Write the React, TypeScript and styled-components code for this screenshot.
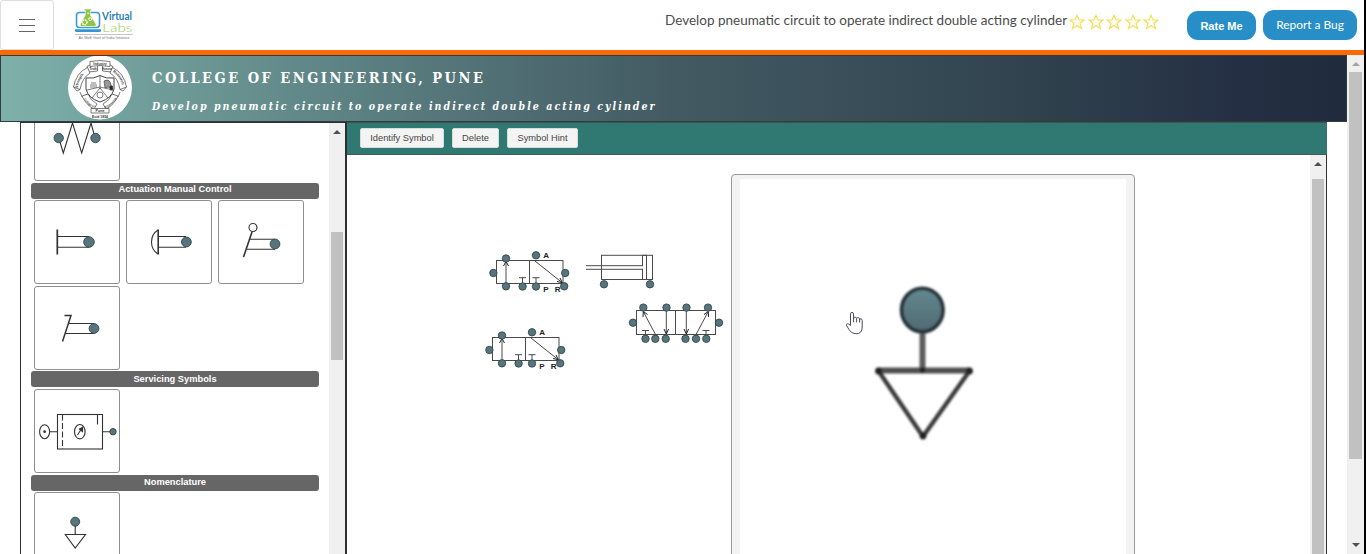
import React from "react";
import styled, { createGlobalStyle } from "styled-components";

const GlobalStyle = createGlobalStyle`
  * { box-sizing: border-box; }
  body { margin: 0; background: #fff; overflow: hidden; font-family: "Liberation Sans", Arial, sans-serif; }
  svg { display: block; }
`;

const DOT = "#56757d";
const INK = "#333";

const Page = styled.div`
  width: 1366px;
  height: 554px;
  display: flex;
  flex-direction: column;
  overflow: hidden;
  border-right: 2px solid #000;
`;

const TopBar = styled.header`
  height: 50px;
  flex: none;
  display: flex;
  align-items: flex-start;
`;

const MenuButton = styled.button`
  width: 54px;
  height: 50px;
  padding: 18px 0 0 18px;
  border: 1px solid #dedede;
  border-radius: 3px;
  background: #fff;
  display: flex;
  flex-direction: column;
  gap: 5px;
`;

const MenuLine = styled.span`
  width: 16px;
  height: 1px;
  background: #666;
`;

const LogoBox = styled.div`
  margin: 6px 0 0 20px;
  width: 62px;
`;

const TopTitle = styled.div`
  margin-left: 529px;
  width: 404px;
  padding-top: 11px;
  font: 13.5px/18px Lato, sans-serif;
  color: #4c4c4c;
  white-space: nowrap;
`;

const Stars = styled.div`
  display: flex;
  gap: 2.5px;
  padding-top: 14px;
`;

const PillButton = styled.button<{ $bold?: boolean }>`
  border: 0;
  border-radius: 11px;
  background: #288ec8;
  color: #fff;
  padding: 0;
  white-space: nowrap;
  width: ${(p) => (p.$bold ? 69 : 94)}px;
  height: ${(p) => (p.$bold ? 29 : 30)}px;
  margin: ${(p) => (p.$bold ? "11px 0 0 28px" : "10px 0 0 7px")};
  padding-bottom: ${(p) => (p.$bold ? 0 : 2)}px;
  font: ${(p) => (p.$bold ? 'bold 11px "Liberation Sans", Arial' : "11.9px Lato")}, sans-serif;
`;

const OrangeRule = styled.div`
  height: 5px;
  flex: none;
  background: #fb6a04;
`;

const Frame = styled.div`
  flex: 1;
  min-height: 0;
  display: flex;
`;

const FrameBody = styled.div`
  width: 1347px;
  display: flex;
  flex-direction: column;
`;

const Banner = styled.div`
  height: 67px;
  flex: none;
  display: flex;
  border: 1px solid #333b3d;
  background: linear-gradient(to right, #7eb1aa 0%, #5a7e80 28%, #435a63 50%, #31444f 75%, #242f43 92%, #202b3d 100%);
  padding-left: 67px;
`;

const BannerText = styled.div`
  margin-left: 20px;
  color: #fff;
  font-family: "DejaVu Serif Condensed", "DejaVu Serif", serif;
  font-weight: bold;
  white-space: nowrap;
`;

const College = styled.h1`
  margin: 12px 0 0;
  font-size: 14.5px;
  line-height: 20px;
  letter-spacing: 2.5px;
`;

const Experiment = styled.h2`
  margin: 10px 0 0;
  font-size: 10.5px;
  line-height: 16px;
  font-style: italic;
  letter-spacing: 2.06px;
`;

const Work = styled.main`
  flex: 1;
  min-height: 0;
  display: flex;
  padding: 0 20px;
`;

const Palette = styled.aside`
  width: 327px;
  flex: none;
  display: flex;
  border: solid #2d3032;
  border-width: 1px 2px 0 1px;
  overflow: hidden;
`;

const PaletteList = styled.div`
  width: 308px;
  flex: none;
  padding-left: 10px;
  margin-top: -26px;
`;

const SectionTitle = styled.div<{ $top: number; $bottom: number; $line?: number }>`
  width: 288px;
  height: 16px;
  margin: ${(p) => p.$top}px 0 ${(p) => p.$bottom}px;
  border-radius: 3px;
  background: #666;
  color: #fff;
  text-align: center;
  font-weight: bold;
  font-size: 9.3px;
  line-height: ${(p) => p.$line ?? 14}px;
`;

const Cards = styled.div`
  display: flex;
  flex-wrap: wrap;
  gap: 2px 6px;
  padding-left: 3px;
`;

const Card = styled.div`
  width: 86px;
  height: 84px;
  border: 1px solid #8e8e8e;
  border-radius: 3px;
  background: #fff;
`;

const ScrollTrack = styled.div<{ $width: number; $top: number }>`
  width: ${(p) => p.$width}px;
  flex: none;
  background: #f0f0f0;
  padding: 0 2px;
  display: flex;
  flex-direction: column;
  align-items: stretch;
  justify-content: space-between;
  padding-top: ${(p) => p.$top}px;
`;

const ScrollThumb = styled.div<{ $before: number; $height: number }>`
  margin-top: ${(p) => p.$before}px;
  height: ${(p) => p.$height}px;
  background: #c1c1c1;
`;

const Arrow = styled.div<{ $color: string; $down?: boolean }>`
  width: 0;
  height: 0;
  margin: 0 auto;
  border: solid transparent;
  border-width: ${(p) => (p.$down ? "4px 4px 0" : "0 4px 4px")};
  border-${(p) => (p.$down ? "top" : "bottom")}-color: ${(p) => p.$color};
`;

const ArrowGroup = styled.div``;

const Editor = styled.section`
  width: 980px;
  flex: none;
  display: flex;
  flex-direction: column;
`;

const Toolbar = styled.div`
  height: 33px;
  flex: none;
  display: flex;
  align-items: flex-start;
  gap: 8px;
  padding: 5px 0 0 13px;
  background: #2f7972;
  border-top: 1px solid #3b5553;
  border-bottom: 1px solid #455856;
`;

const ToolButton = styled.button<{ $width: number }>`
  width: ${(p) => p.$width}px;
  height: 20px;
  padding: 0;
  border: 1px solid #d5dddc;
  border-radius: 2px;
  background: #f4f4f4;
  color: #444;
  font: 9.3px "Liberation Sans", Arial, sans-serif;
  white-space: nowrap;
`;

const CanvasRow = styled.div`
  flex: 1;
  min-height: 0;
  display: flex;
  border-right: 1px solid #333;
`;

const Canvas = styled.div`
  position: relative;
  flex: 1;
  overflow: hidden;
`;

const Placed = styled.div<{ $x: number; $y: number }>`
  position: absolute;
  left: ${(p) => p.$x}px;
  top: ${(p) => p.$y}px;
`;

const HintPanel = styled.div`
  width: 404px;
  height: 420px;
  border: 1px solid #999;
  border-radius: 4px;
  background: #f3f3f3;
  padding: 4px 8px;
`;

const HintPicture = styled.div`
  height: 100%;
  background: #fff;
`;

type P = { x: number; y: number; r?: number };
const Port = ({ x, y, r = 3.7 }: P) => (
  <circle cx={x} cy={y} r={r} fill={DOT} stroke="#35474c" strokeWidth={0.9} />
);

const Symbol = ({ children }: { children: React.ReactNode }) => (
  <svg width="84" height="82" viewBox="0 0 84 82" fill="none" stroke={INK} strokeWidth="1.1">
    {children}
  </svg>
);

const Tee = ({ x, y }: P) => <path d={`M${x} ${y + 6}V${y}M${x - 3.5} ${y}h7`} />;

const Valve32 = () => (
  <svg width="100" height="58" fill="none" stroke="#4a4a4a" strokeWidth="1">
    <rect x="16.5" y="20.5" width="66.5" height="23" />
    <path d="M49.5 20.5V43.5M26 44V22M55 21L82 42.5" />
    <path d="M23.5 26L26 21.5L28.5 26M77 41.5L82.3 42.7L80 38" stroke="#222" />
    <Tee x={42.5} y={37.7} />
    <Tee x={56} y={37.7} />
    <Port x={13.4} y={33} />
    <Port x={85.2} y={33} />
    <Port x={26} y={18.5} />
    <Port x={26} y={46.3} />
    <Port x={42.6} y={46.5} />
    <Port x={56} y={46.5} />
    <Port x={84.2} y={46.3} />
    <Port x={56} y={15.3} />
    <g fill="#222" stroke="none" fontSize="8" fontWeight="bold" fontFamily="Liberation Sans, Arial, sans-serif">
      <text x="63.3" y="18">A</text>
      <text x="63.3" y="52">P</text>
      <text x="74.7" y="52">R</text>
    </g>
  </svg>
);

const Cylinder = () => (
  <svg width="70" height="42" fill="none" stroke="#4a4a4a" strokeWidth="1">
    <rect x="15.5" y="5.3" width="51" height="24.2" />
    <path d="M56.5 5.3H60.5V29.5H56.5ZM0 15.7H56.5M0 19.3H56.5" />
    <path d="M56.5 16.3v2.4" stroke="#fff" strokeWidth="1.4" />
    <Port x={18} y={34.3} />
    <Port x={64} y={34.3} />
  </svg>
);

const Valve52 = () => (
  <svg width="96" height="46" fill="none" stroke="#4a4a4a" strokeWidth="1">
    <rect x="8.5" y="10.5" width="79" height="24" />
    <path d="M47.5 10.5V34.5M27.5 34.5L15.5 12M38.3 8V33.5M58.3 8V33.5M68 34.5L80 12" />
    <path d="M15 17L15.3 11.5L19.5 14.5M36 29L38.3 34L40.6 29M56 29L58.3 34L60.6 29M76 14.5L80.3 11.5L80.5 17" stroke="#222" />
    <Tee x={17.5} y={30.5} />
    <Tee x={78} y={30.5} />
    {[15.3, 38.5, 58.5, 80].map((x) => <Port key={x} x={x} y={7.6} />)}
    {[17.5, 27.3, 37.7, 57.5, 68, 78.3].map((x) => <Port key={x} x={x} y={38.8} />)}
    <Port x={5} y={22.7} />
    <Port x={91} y={22.7} />
  </svg>
);

const HintSymbol = () => (
  <svg width="110" height="166" fill="none" stroke="#3c3c3c">
    <defs>
      <linearGradient id="port" x1="0" y1="0" x2="0" y2="1">
        <stop offset="0" stopColor="#638891" />
        <stop offset="1" stopColor="#506a71" />
      </linearGradient>
      <filter id="soft"><feGaussianBlur stdDeviation="1" /></filter>
    </defs>
    <g filter="url(#soft)">
      <path d="M52.5 50V92" strokeWidth="6" stroke="#5c5c5c" />
      <path d="M8 91.5H100" strokeWidth="6" stroke="#505050" />
      <path d="M8.5 92L53 157.5L99.5 92" strokeWidth="4.5" strokeLinejoin="round" />
      <g fill="#222" stroke="none">
        <circle cx="8.5" cy="92" r="3.4" />
        <circle cx="99.5" cy="92" r="3.4" />
        <circle cx="53" cy="157" r="3.4" />
        <circle cx="52.5" cy="91" r="2.8" />
      </g>
      <ellipse cx="52.3" cy="31" rx="20.7" ry="21.7" fill="url(#port)" stroke="#263338" strokeWidth="3.8" />
    </g>
  </svg>
);

const HandCursor = () => (
  <svg width="20" height="25" fill="#fff" stroke="#4c4d58" strokeWidth="1" strokeLinejoin="round">
    <path d="M5.5 14V3Q5.5 1.4 7 1.4T8.5 3V7.2Q9 6 10.3 6.2T11.6 7.4Q12.3 6.4 13.4 6.7T14.6 8Q17 7 17.2 9.5V16Q17.2 22.8 11 22.8Q6.5 22.8 4.2 18.8L1.5 14.5Q1 13 2.2 12.7Q3.5 12.4 5.5 14.5Z" />
    <path d="M8.6 7v4.3M11.6 7.4v4M14.6 8v3.5" fill="none" />
  </svg>
);

const Star = () => (
  <svg width="16" height="16" viewBox="0 0 16 16" fill="#fffef4" stroke="#f7dd55" strokeWidth="1.1">
    <path d="M8 1.2L10 6H15.1L11 9.2L12.6 14.6L8 11.5L3.4 14.6L5 9.2L.9 6H6Z" />
  </svg>
);

const VirtualLabsLogo = () => (
  <svg width="62" height="36" viewBox="74 6 62 36">
    <rect x="76.5" y="12.5" width="23" height="15" rx="3" fill="#fff" stroke="#3d9ad0" strokeWidth="1.6" />
    <path d="M75 29.2H101V31Q101 32 99.5 32H76.5Q75 32 75 31Z" fill="#3296d2" />
    <path d="M84 9H91.5V10.5H90.3V15L96.2 24.5Q96.5 26.5 94 26.5H81Q79.5 25.5 80.6 23.5L85.3 15V10.5H84Z" fill="#8dc63f" stroke="#fff" strokeWidth=".6" />
    <circle cx="84.6" cy="22.3" r="2.4" fill="#8dc63f" stroke="#fff" strokeWidth="1.4" strokeDasharray="1.5 .6" />
    <circle cx="90.2" cy="19.2" r="1.5" fill="none" stroke="#fff" />
    <circle cx="88" cy="13.3" r=".8" fill="#fff" />
    <text x="102" y="20.2" fontFamily="Lato, sans-serif" fontSize="10.5" fontWeight="bold" fill="#2a7fae" textLength="30" lengthAdjust="spacingAndGlyphs">Virtual</text>
    <text x="102.3" y="31.8" fontFamily="Lato, sans-serif" fontSize="11" fontWeight="300" fill="#9ccb55" textLength="30" lengthAdjust="spacingAndGlyphs">Labs</text>
    <path d="M75 34.5H132.5" stroke="#aaa" strokeWidth=".7" />
    <text x="78.5" y="39.2" fontFamily="Liberation Sans, Arial, sans-serif" fontSize="4" fill="#777" textLength="51" lengthAdjust="spacingAndGlyphs">An MoE Govt of India Initiative</text>
  </svg>
);

const CollegeEmblem = () => (
  <svg width="64" height="65" viewBox="0 0 64 65" fill="none" stroke="#444" strokeWidth=".7">
    <circle cx="32" cy="31.5" r="32" fill="#fff" stroke="none" />
    <path id="ribbonLeft" d="M9.5 34Q10.5 20 21 15" stroke="none" />
    <path id="ribbonRight" d="M43 15Q53.5 20 54.5 34" stroke="none" />
    <path id="ribbonBottomLeft" d="M15.5 42Q19 49 27 52" stroke="none" />
    <path id="ribbonBottomRight" d="M37 52Q45 49 48.5 42" stroke="none" />
    <path d="M22 5.5Q32 3.5 42 5.5V10.5Q32 8.5 22 10.5ZM22 9L19 10.5L20.5 16L29.5 15V10M42 9L45 10.5L43.5 16L34.5 15V10" fill="#fff" />
    <path d="M19.5 11.5Q8 17 5.5 31L12 33.5Q14 22 22 17ZM44.5 11.5Q56 17 58.5 31L52 33.5Q50 22 42 17Z" fill="#fff" />
    <path d="M5.5 31L9 35L12 33.5M58.5 31L55 35L52 33.5M12 36L14 41L20 38M52 36L50 41L44 38" />
    <path d="M14 40Q18 49 26 53L29 48Q22 44 20 38ZM50 40Q46 49 38 53L35 48Q42 44 44 38Z" fill="#fff" />
    <path d="M23 52.5H41V57H23Z" fill="#fff" />
    <path d="M18 22Q26 23 32 19.5Q38 23 46 22V33Q44 42 32 46Q20 42 18 33Z" fill="#fff" strokeWidth="1" />
    <path d="M32 20V33M19 34L32 31L45 34M24 42L32 32L40 42M22 29H29M22 31H29M23 27H28" />
    <path d="M36 25Q42 22 43 29L45 33L40 31L37 32Z" fill="#999" />
    <path d="M42 30h2.5v4H42Z" fill="#222" />
    <circle cx="32" cy="39" r="3" />
    <g fill="#333" stroke="none" fontFamily="Liberation Sans, Arial, sans-serif" fontSize="3.6" fontWeight="bold">
      <text x="32" y="8.8" fontSize="3.4" textAnchor="middle">Industry</text>
      <text x="25.2" y="14.2" fontSize="3" textAnchor="middle">Truth</text>
      <text x="39" y="14.2" fontSize="2.8" textAnchor="middle">Honour</text>
      <text><textPath href="#ribbonLeft" startOffset="2">Strength</textPath></text>
      <text><textPath href="#ribbonRight" startOffset="2">Research</textPath></text>
      <text fontSize="2.8"><textPath href="#ribbonBottomLeft" startOffset="1">College of</textPath></text>
      <text fontSize="2.6"><textPath href="#ribbonBottomRight">Engineering</textPath></text>
      <text x="32" y="56.2" textAnchor="middle">Pune</text>
      <text x="32" y="61.8" fontSize="3.4" textAnchor="middle">Estd 1854</text>
    </g>
  </svg>
);

export default function App() {
  return (
    <>
      <GlobalStyle />
      <Page>
        <TopBar>
          <MenuButton aria-label="Menu"><MenuLine /><MenuLine /><MenuLine /></MenuButton>
          <LogoBox><VirtualLabsLogo /></LogoBox>
          <TopTitle>Develop pneumatic circuit to operate indirect double acting cylinder</TopTitle>
          <Stars>{[1, 2, 3, 4, 5].map((n) => <Star key={n} />)}</Stars>
          <PillButton $bold>Rate Me</PillButton>
          <PillButton>Report a Bug</PillButton>
        </TopBar>
        <OrangeRule />
        <Frame>
          <FrameBody>
            <Banner>
              <CollegeEmblem />
              <BannerText>
                <College>COLLEGE OF ENGINEERING, PUNE</College>
                <Experiment>Develop pneumatic circuit to operate indirect double acting cylinder</Experiment>
              </BannerText>
            </Banner>
            <Work>
              <Palette>
                <PaletteList>
                  <Cards>
                    <Card>
                      <Symbol>
                        <path d="M25 44L28.3 55L37.5 25L46.7 55L56 25L59 36" />
                        <Port x={23.7} y={40} r={4.7} />
                        <Port x={60.5} y={40} r={4.7} />
                      </Symbol>
                    </Card>
                  </Cards>
                  <SectionTitle $top={2} $bottom={1} $line={13}>Actuation Manual Control</SectionTitle>
                  <Cards>
                    <Card>
                      <Symbol>
                        <path d="M22.3 35.5H54M22.3 46.3H54" />
                        <path d="M22.3 28.5V53.5" strokeWidth="1.7" />
                        <Port x={54} y={41} r={5.3} />
                      </Symbol>
                    </Card>
                    <Card>
                      <Symbol>
                        <path d="M31 35.5H59M31 46.3H59M31 29Q24.5 33 24.5 41T31 53" />
                        <path d="M31.2 28.5V53.5" strokeWidth="1.6" />
                        <Port x={59.4} y={41} r={4.9} />
                      </Symbol>
                    </Card>
                    <Card>
                      <Symbol>
                        <path d="M31 38.3H56M28 48.3H56" />
                        <path d="M33 31L24.5 56" strokeWidth="1.6" />
                        <circle cx="34" cy="26.5" r="4" />
                        <Port x={56} y={43} r={4.9} />
                      </Symbol>
                    </Card>
                    <Card>
                      <Symbol>
                        <path d="M34 36.5H59M31 46.5H59" />
                        <path d="M29.5 28.5H36L27.5 54.5" strokeWidth="1.5" />
                        <Port x={59} y={41.5} r={4.9} />
                      </Symbol>
                    </Card>
                  </Cards>
                  <SectionTitle $top={1} $bottom={2} $line={16}>Servicing Symbols</SectionTitle>
                  <Cards>
                    <Card>
                      <Symbol>
                        <rect x="22.5" y="24.5" width="45" height="34.5" />
                        <path d="M27.5 24.5V59" strokeDasharray="6 2.5" />
                        <path d="M62.5 24.5V34.5M15 41.7H22.5M67.5 41.7H75" />
                        <ellipse cx="9.6" cy="41.7" rx="5" ry="7" />
                        <circle cx="9.6" cy="41.7" r=".8" fill="#222" />
                        <ellipse cx="44.8" cy="41.7" rx="5.3" ry="7.2" />
                        <path d="M42.5 45L47.3 37.5M44.5 39L47.5 37.5V41.5Z" fill="#333" />
                        <Port x={78} y={41.7} r={3.2} />
                      </Symbol>
                    </Card>
                  </Cards>
                  <SectionTitle $top={2} $bottom={1}>Nomenclature</SectionTitle>
                  <Cards>
                    <Card>
                      <Symbol>
                        <path d="M40.2 32V41.5M30.3 41.5H50.5L40.2 55Z" />
                        <Port x={40.2} y={28.7} r={4.5} />
                      </Symbol>
                    </Card>
                  </Cards>
                </PaletteList>
                <ScrollTrack $width={16} $top={7}>
                  <ArrowGroup>
                    <Arrow $color="#505050" />
                    <ScrollThumb $before={98} $height={128} />
                  </ArrowGroup>
                </ScrollTrack>
              </Palette>
              <Editor>
                <Toolbar>
                  <ToolButton $width={84}>Identify Symbol</ToolButton>
                  <ToolButton $width={47}>Delete</ToolButton>
                  <ToolButton $width={71}>Symbol Hint</ToolButton>
                </Toolbar>
                <CanvasRow>
                  <Canvas>
                    <Placed $x={133} $y={85}><Valve32 /></Placed>
                    <Placed $x={129} $y={161.5}><Valve32 /></Placed>
                    <Placed $x={239} $y={95}><Cylinder /></Placed>
                    <Placed $x={281} $y={145}><Valve52 /></Placed>
                    <Placed $x={384} $y={19}>
                      <HintPanel><HintPicture /></HintPanel>
                    </Placed>
                    <Placed $x={523} $y={124}><HintSymbol /></Placed>
                    <Placed $x={498} $y={156}><HandCursor /></Placed>
                  </Canvas>
                  <ScrollTrack $width={16} $top={7}>
                    <ArrowGroup>
                      <Arrow $color="#505050" />
                      <ScrollThumb $before={13} $height={376} />
                    </ArrowGroup>
                  </ScrollTrack>
                </CanvasRow>
              </Editor>
            </Work>
          </FrameBody>
          <ScrollTrack $width={17} $top={7}>
            <ArrowGroup>
              <Arrow $color="#a3a3a3" />
              <ScrollThumb $before={6} $height={387} />
            </ArrowGroup>
            <ArrowGroup>
              <Arrow $color="#505050" $down />
              <ScrollThumb $before={7} $height={0} />
            </ArrowGroup>
          </ScrollTrack>
        </Frame>
      </Page>
    </>
  );
}
